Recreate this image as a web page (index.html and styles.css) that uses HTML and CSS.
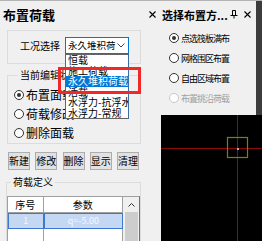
FILE: index.html
```html
<!DOCTYPE html>
<html>
<head>
    <title>布置荷载</title>
    <link rel="stylesheet" href="styles.css">
</head>
<body>
<div class="app">
    <div class="dock-left">
        <div class="dock-head">
            <span class="dock-title">布置荷载</span>
            <svg class="x-icon" width="7" height="7" viewBox="0 0 7 7"><path d="M0.5 0.5L6.5 6.5M6.5 0.5L0.5 6.5" stroke="#000" stroke-width="1.1"/></svg>
        </div>

        <div class="grp grp-case">
            <span class="case-label">工况选择</span>
            <div class="combo">
                <span class="combo-text">永久堆积荷</span>
                <svg width="8" height="5" viewBox="0 0 8 5"><path d="M0.5 0.5L4 4L7.5 0.5" fill="none" stroke="#444" stroke-width="1"/></svg>
            </div>
        </div>

        <fieldset class="grp grp-state">
            <legend>当前编辑状态</legend>
            <div class="radio big on"><i></i>布置面载</div>
            <div class="radio big"><i></i>荷载修改</div>
            <div class="radio big"><i></i>删除面载</div>
        </fieldset>

        <div class="btns">
            <button>新建</button>
            <button>修改</button>
            <button>删除</button>
            <button>显示</button>
            <button>清理</button>
        </div>

        <fieldset class="grp grp-def">
            <legend>荷载定义</legend>
            <div class="grid">
                <div class="grid-table">
                    <div class="row head"><span class="c1">序号</span><span class="c2">参数</span></div>
                    <div class="row sel"><span class="c1">1</span><span class="c2">q=-5.00</span></div>
                    <div class="row"><span class="c1"></span><span class="c2"></span></div>
                </div>
                <div class="vscroll">
                    <svg width="7" height="4" viewBox="0 0 7 4"><path d="M0.5 3.5L3.5 0.5L6.5 3.5" fill="none" stroke="#333" stroke-width="1"/></svg>
                    <div class="thumb"></div>
                </div>
            </div>
        </fieldset>

        <ul class="dropdown">
            <li>恒载</li>
            <li>施工荷载</li>
            <li class="sel">永久堆积荷载</li>
            <li>活载</li>
            <li>水浮力-抗浮水</li>
            <li>水浮力-常规</li>
        </ul>
        <div class="mark"></div>
    </div>

    <div class="right-col">
        <div class="dock-right">
            <div class="dock-head">
                <span class="dock-title small">选择布置方...</span>
                <span class="head-icons">
                    <svg width="8" height="9" viewBox="0 0 8 9"><path d="M2.5 0.5H5.5V5.5M2.5 0.5V5.5M0.5 5.5H7.5M4 5.5V8.5" fill="none" stroke="#000" stroke-width="1"/></svg>
                    <svg class="x-icon" width="7" height="7" viewBox="0 0 7 7"><path d="M0.5 0.5L6.5 6.5M6.5 0.5L0.5 6.5" stroke="#000" stroke-width="1.1"/></svg>
                </span>
            </div>
            <div class="radio on"><i></i>点选筏板满布</div>
            <div class="radio"><i></i>网格围区布置</div>
            <div class="radio"><i></i>自由区域布置</div>
            <div class="radio off"><i></i>布置挑沿荷载</div>
        </div>
        <div class="canvas">
            <svg width="101" height="126" viewBox="0 0 101 126">
                <line x1="76.5" y1="0" x2="76.5" y2="126" stroke="#8c0a0a" stroke-width="1"/>
                <line x1="0" y1="33.5" x2="101" y2="33.5" stroke="#8c0a0a" stroke-width="1"/>
                <rect x="66.5" y="22.5" width="20" height="20" fill="none" stroke="#7d7d12" stroke-width="1.2"/>
                <rect x="76" y="33" width="2" height="2" fill="#b0b0b0"/>
            </svg>
        </div>
    </div>
</div>
</body>
</html>
```

FILE: styles.css
```css
body {
    margin: 0;
    width: 262px;
    height: 241px;
    overflow: hidden;
    background: #f0f0f0;
    font-family: "Noto Sans CJK SC", "Liberation Sans", sans-serif;
    font-size: 10px;
    color: #000;
}
.app {
    display: flex;
    height: 241px;
    box-sizing: border-box;
    border-top: 1px solid #b4b4b4;
    overflow: hidden;
}
.dock-left {
    position: relative;
    width: 161px;
    flex: none;
    overflow: hidden;
}
.dock-head {
    display: flex;
    justify-content: space-between;
    align-items: center;
    height: 27px;
    padding: 0 5px 0 3px;
}
.dock-title {
    font-weight: bold;
    font-size: 13px;
    line-height: 14px;
}
.dock-title.small {
    font-size: 11px;
}
.head-icons {
    display: flex;
    align-items: center;
    gap: 6px;
}

/* group boxes */
.grp {
    border: 1px solid #dcdcdc;
    margin: 0 20px 0 7px;
    padding: 0;
    min-width: 0;
}
.grp legend {
    margin-left: 4px;
    padding: 0 2px;
    line-height: 12px;
}
.grp-case {
    display: flex;
    align-items: flex-start;
    margin-top: 2px;
    padding: 6px 0 0 12px;
    box-sizing: border-box;
    height: 34px;
}
.case-label {
    line-height: 17px;
    width: 40px;
}
.combo {
    display: flex;
    align-items: center;
    justify-content: space-between;
    margin-left: 5px;
    width: 64px;
    height: 17px;
    box-sizing: border-box;
    border: 1px solid #0078d7;
    background: #fff;
    padding: 0 3px 0 2px;
    line-height: 15px;
}
.combo-text {
    font-size: 9.5px;
    white-space: nowrap;
}
.combo svg {
    flex: none;
}
.grp-state {
    margin-top: 5px;
    padding: 4px 0 1px 6px;
}
.radio {
    display: flex;
    align-items: center;
    height: 19px;
    font-size: 12px;
    line-height: 19px;
    white-space: nowrap;
}
.radio i {
    flex: none;
    width: 10px;
    height: 10px;
    box-sizing: border-box;
    border: 1px solid #333;
    border-radius: 50%;
    background: #fff;
    margin-right: 2px;
    position: relative;
}
.radio.on i::after {
    content: "";
    position: absolute;
    left: 2px;
    top: 2px;
    width: 4px;
    height: 4px;
    border-radius: 50%;
    background: #333;
}
.dock-right .radio {
    height: 20px;
    font-size: 9px;
    letter-spacing: -1px;
    padding-left: 8px;
}
.dock-right .radio i {
    margin-right: 2px;
}
.radio.off {
    color: #a0a0a0;
}
.radio.off i {
    border-color: #c8c8c8;
}

.btns {
    display: flex;
    justify-content: space-between;
    margin: 8px 22px 0 8px;
}
.btns button {
    width: 22px;
    height: 18px;
    padding: 0;
    border: 1px solid #adadad;
    background: #e1e1e1;
    font-family: inherit;
    font-size: 10px;
    line-height: 16px;
    color: #000;
}

.grp-def {
    margin: 6px 20px 0 6px;
    padding: 8px 0 0 0;
}
.grid {
    display: flex;
    border: 1px solid #a0a0a0;
    border-right-color: #6e6e6e;
    height: 46px;
    background: #fff;
}
.grid-table {
    width: 115px;
}
.row {
    display: flex;
    height: 15px;
    line-height: 15px;
    text-align: center;
}
.row .c1 {
    width: 35px;
    border-right: 1px solid #a0a0a0;
}
.row .c2 {
    width: 79px;
    border-right: 1px solid #a0a0a0;
}
.row.head {
    border-bottom: 1px solid #a0a0a0;
}
.row.sel {
    height: 16px;
    line-height: 14px;
    color: #f4f8ff;
    font-size: 9px;
}
.row.sel span {
    background: #c4d8f3;
    border: 1px solid #3c78d0;
    box-sizing: border-box;
}
.row.sel .c1 { width: 36px; }
.row.sel .c2 { width: 80px; }
.vscroll {
    width: 16px;
    background: #f0f0f0;
    display: flex;
    flex-direction: column;
    align-items: center;
}
.vscroll svg {
    margin-top: 6px;
}
.thumb {
    margin-top: 5px;
    width: 13px;
    flex: 1;
    background: #cdcdcd;
}

/* open combo list, lies over the groups */
.dropdown {
    position: absolute;
    left: 65px;
    top: 53px;
    width: 64px;
    height: 65px;
    margin: 0;
    padding: 0;
    list-style: none;
    box-sizing: border-box;
    border: 1px solid #646464;
    border-right-color: #3a6ea5;
    background: #fff;
    overflow: hidden;
    white-space: nowrap;
}
.dropdown li {
    height: 10.5px;
    line-height: 10.5px;
    padding-left: 2px;
}
.dropdown li.sel {
    background: #0078d7;
    color: #fff;
}
.mark {
    position: absolute;
    left: 58px;
    top: 66px;
    width: 83px;
    height: 27px;
    box-sizing: border-box;
    border: 3px solid #f02828;
}

.right-col {
    flex: 1;
    display: flex;
    flex-direction: column;
}
.dock-right {
    height: 114px;
    flex: none;
    border-right: 6px solid #3c3c3c;
}
.dock-right .dock-head {
    padding: 0 5px 0 1px;
}
.canvas {
    flex: 1;
    background: #000;
    overflow: hidden;
}
.canvas svg {
    display: block;
}
```
